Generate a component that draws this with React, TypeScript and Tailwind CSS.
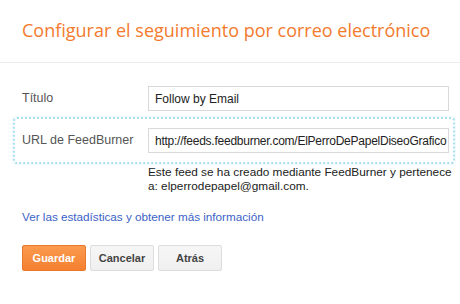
// Blogger "Follow by Email" gadget settings dialog.
// Title, settings form with the focused FeedBurner row, then the action buttons.

const arial = "font-['Liberation_Sans',Arial,sans-serif]";

function Button({ label, primary = false }: { label: string; primary?: boolean }) {
  return (
    <button
      type="button"
      className={
        primary
          ? `${arial} h-[26px] w-[64px] rounded-[2px] border border-[#e8782e] bg-gradient-to-b from-[#fb9a4e] to-[#f4802f] text-[11px] font-bold text-white`
          : `${arial} h-[26px] w-[64px] rounded-[2px] border border-[#dcdcdc] bg-gradient-to-b from-[#f6f6f6] to-[#f0f0f0] text-[11px] font-bold text-[#444]`
      }
    >
      {label}
    </button>
  );
}

export default function App() {
  return (
    <div className="h-[304px] w-[460px] overflow-hidden bg-white">
      <h1 className="border-b border-[#ebebeb] px-[22px] pb-[20px] pt-[18px] font-['Open_Sans',sans-serif] text-[18px] leading-[24px] text-[#f47a2e]">
        Configurar el seguimiento por correo electrónico
      </h1>

      {/* Título */}
      <div className={`${arial} mt-[23px] flex items-center pl-[22px]`}>
        <label className="w-[126px] text-[12.5px] text-[#555]">Título</label>
        <input
          readOnly
          value="Follow by Email"
          className="h-[25px] w-[301px] border border-[#d9d9d9] px-[6px] text-[12px] text-[#222] outline-none"
        />
      </div>

      {/* URL row, focused */}
      <div
        className={`${arial} ml-[13px] mt-[6px] flex h-[47px] w-[442px] items-center rounded-[4px] border-[2px] border-dotted border-[#a9dff0] pl-[7px] shadow-[0_0_2px_#c8ecf7]`}
      >
        <label className="w-[126px] text-[12.5px] text-[#555]">URL de FeedBurner</label>
        <input
          readOnly
          value="http://feeds.feedburner.com/ElPerroDePapelDiseoGrafico"
          className="h-[25px] w-[301px] border border-[#d9d9d9] pl-[6px] pr-[1px] text-[12px] tracking-[-0.25px] text-[#222] outline-none"
        />
      </div>

      <p className={`${arial} ml-[148px] mt-[1px] w-[306px] text-[11.8px] leading-[14px] text-[#222]`}>
        Este feed se ha creado mediante FeedBurner y pertenece a: elperrodepapel@gmail.com.
      </p>

      <a href="#" className={`${arial} ml-[22px] mt-[17px] block text-[11.7px] leading-[14px] text-[#3a62c6]`}>
        Ver las estadísticas y obtener más información
      </a>

      <div className="ml-[22px] mt-[21px] flex gap-[4px]">
        <Button label="Guardar" primary />
        <Button label="Cancelar" />
        <Button label="Atrás" />
      </div>
    </div>
  );
}
